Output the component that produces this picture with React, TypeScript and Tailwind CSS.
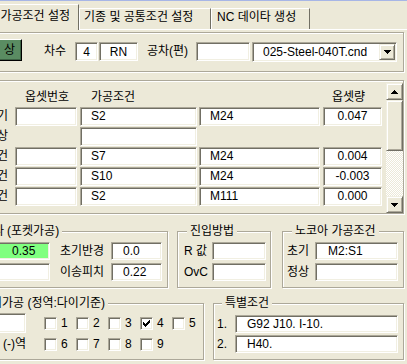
import React from "react";

const SUNKEN =
  "border border-t-[#aca899] border-l-[#aca899] border-r-white border-b-white shadow-[inset_1px_1px_0_#716f64,inset_-1px_-1px_0_#f1efe2]";
const RAISED =
  "border border-t-[#f1efe2] border-l-[#f1efe2] border-r-[#716f64] border-b-[#716f64] shadow-[inset_1px_1px_0_#ffffff,inset_-1px_-1px_0_#aca899]";
const ETCHED = "border border-[#aca899] shadow-[inset_1px_1px_0_#ffffff,1px_1px_0_#ffffff]";

type P = { className?: string; children?: React.ReactNode };

function Field({ className = "", children }: P) {
  return (
    <div className={`${SUNKEN} shrink-0 flex items-center whitespace-nowrap overflow-hidden ${className}`}>
      {children}
    </div>
  );
}

function Group({
  className = "",
  title,
  titleClass = "",
  children,
}: P & { title: React.ReactNode; titleClass?: string }) {
  return (
    <div className={`${ETCHED} shrink-0 flex flex-col ${className}`}>
      <div className={`-mt-[8px] h-[14px] w-fit bg-[#ece9d8] px-[3px] leading-[14px] whitespace-nowrap flex ${titleClass}`}>
        {title}
      </div>
      {children}
    </div>
  );
}

function UpArrow() {
  return (
    <svg width="7" height="4" viewBox="0 0 7 4" shapeRendering="crispEdges">
      <path d="M3 0h1v1h1v1h1v1h1v1H0V3h1V2h1V1h1z" fill="#000" />
    </svg>
  );
}

function DownArrow() {
  return (
    <svg width="7" height="4" viewBox="0 0 7 4" shapeRendering="crispEdges">
      <path d="M0 0h7v1h-1v1h-1v1h-1v1h-1V3H2V2H1V1H0z" fill="#000" />
    </svg>
  );
}

function Check({ n, on = false }: { n: string; on?: boolean }) {
  return (
    <div className="w-[32px] shrink-0 flex items-center">
      <div className={`${SUNKEN} w-[13px] h-[13px] bg-white shrink-0 flex items-center justify-center`}>
        {on ? (
          <svg width="7" height="7" viewBox="0 0 7 7" shapeRendering="crispEdges">
            <path
              d="M6 0h1v3H6v1H5v1H4v1H3v1H2V6H1V5H0V2h1v1h1v1h1V3h1V2h1V1h1z"
              fill="#000"
            />
          </svg>
        ) : null}
      </div>
      <span className="ml-[4px] leading-[14px]">{n}</span>
    </div>
  );
}

function Row({
  label,
  off = true,
  cond,
  m,
  val,
}: {
  label: string;
  off?: boolean;
  cond?: string;
  m?: string;
  val?: string;
}) {
  return (
    <div className="flex h-[19px] leading-[19px]">
      <div className="w-[44px] shrink-0 flex justify-end pr-[7px]">
        <span className="whitespace-nowrap shrink-0">{label}</span>
      </div>
      {off ? <Field className="w-[62px] bg-white" /> : <div className="w-[62px] shrink-0" />}
      <Field className="ml-[3px] w-[117px] bg-white pl-[10px]">{cond}</Field>
      {m !== undefined ? (
        <>
          <Field className="ml-[2px] w-[121px] bg-white pl-[10px]">{m}</Field>
          <Field className="ml-[3px] w-[59px] bg-white justify-center">{val}</Field>
        </>
      ) : null}
    </div>
  );
}

export default function App() {
  return (
    <div className="w-[407px] h-[364px] overflow-hidden bg-[#ece9d8] text-[12px] text-black font-[family-name:'Liberation_Sans','Noto_Sans_CJK_KR',sans-serif] flex flex-col select-none">
      <div className="h-px bg-[#a7b6e6] shrink-0" />

      {/* Tabs */}
      <div className="h-[29px] shrink-0 flex items-end">
        <div className="ml-[-21px] w-[100px] h-[26px] shrink-0 border-t border-l border-r border-t-white border-l-white border-r-[#716f64] flex justify-end pr-[8px] pt-[4px] leading-[14px] whitespace-nowrap">
          가공조건 설정
        </div>
        <div className="flex-1 h-full flex items-end border-b border-b-white">
          <div className="w-[132px] h-[21px] shrink-0 border-t border-l border-r border-t-white border-l-white border-r-[#716f64] pl-[4px] pt-[1px] leading-[14px] whitespace-nowrap">
            기종 및 공통조건 설정
          </div>
          <div className="w-[99px] h-[21px] shrink-0 border-t border-l border-r border-t-white border-l-white border-r-[#716f64] pl-[5px] pt-[1px] leading-[14px] whitespace-nowrap">
            NC 데이타 생성
          </div>
        </div>
      </div>

      {/* Top group */}
      <div className={`${ETCHED} mt-[2px] ml-[-30px] mr-[3px] h-[40px] shrink-0 pt-[6px] flex items-start`}>
        <div className="w-[51px] h-[22px] shrink-0 bg-[#5a8c62] border border-t-white border-l-white border-r-black border-b-black shadow-[inset_-1px_-1px_0_#3d6244] flex items-center justify-end pr-[6px] leading-[14px]">
          상
        </div>
        <div className="ml-[22px] w-[31px] mt-[3px] h-[19px] leading-[19px] shrink-0 whitespace-nowrap">차수</div>
        <Field className="mt-[3px] w-[23px] h-[19px] bg-white justify-center">4</Field>
        <Field className="ml-[1px] mt-[3px] w-[39px] h-[19px] bg-white justify-center">RN</Field>
        <div className="ml-[9px] w-[49px] mt-[3px] h-[19px] leading-[19px] shrink-0 whitespace-nowrap">공차(편)</div>
        <Field className="mt-[3px] w-[54px] h-[19px] bg-white" />
        <div className={`${SUNKEN} ml-[2px] mt-[3px] w-[145px] h-[20px] shrink-0 bg-white flex items-stretch p-[1px]`}>
          <div className="flex-1 flex items-center pl-[9px] whitespace-nowrap overflow-hidden">025-Steel-040T.cnd</div>
          <div className={`${RAISED} w-[16px] shrink-0 bg-[#ece9d8] flex items-center justify-center`}>
            <DownArrow />
          </div>
        </div>
      </div>

      {/* Table frame */}
      <div className={`${ETCHED} mt-[8px] ml-[-30px] mr-[3px] h-[134px] shrink-0 flex`}>
        <div className="flex-1 flex flex-col pt-[9px]">
          <div className="flex h-[14px] leading-[14px] whitespace-nowrap">
            <div className="w-[44px] shrink-0" />
            <div className="w-[62px] shrink-0 pl-[10px]">옵셋번호</div>
            <div className="ml-[3px] w-[117px] shrink-0 pl-[11px]">가공조건</div>
            <div className="ml-[2px] w-[121px] shrink-0" />
            <div className="ml-[3px] w-[59px] shrink-0 pl-[9px]">옵셋량</div>
          </div>
          <div className="mt-[3px] flex flex-col gap-[1px]">
            <Row label="초기" cond="S2" m="M24" val="0.047" />
            <Row label="정상" off={false} cond="" />
            <Row label="황삭조건" cond="S7" m="M24" val="0.004" />
            <Row label="중삭조건" cond="S10" m="M24" val="-0.003" />
            <Row label="정삭조건" cond="S2" m="M111" val="0.000" />
          </div>
        </div>
        <div className="w-[17px] mt-[2px] h-[130px] shrink-0 flex flex-col">
          <div className={`${RAISED} h-[17px] shrink-0 bg-[#ece9d8] flex items-center justify-center`}>
            <UpArrow />
          </div>
          <div className={`${RAISED} h-[51px] shrink-0 bg-[#ece9d8]`} />
          <div className="flex-1 bg-[image:repeating-conic-gradient(#ffffff_0_25%,#ece9d8_0_50%)] bg-[length:2px_2px]" />
          <div className={`${RAISED} h-[17px] shrink-0 bg-[#ece9d8] flex items-center justify-center`}>
            <DownArrow />
          </div>
        </div>
      </div>

      {/* Middle groups */}
      <div className="mt-[17px] h-[57px] shrink-0 flex ml-[-120px]">
        <Group
          className="w-[288px] h-full"
          titleClass="ml-[16px]"
          title={
            <>
              <span className="w-[104px] shrink-0 flex justify-end">헬리컬 파라메타</span>
              <span className="ml-[3px]">(포켓가공)</span>
            </>
          }
        >
          <div className="pt-[4px] flex flex-col gap-[3px]">
            <div className="flex h-[18px] leading-[18px]">
              <Field className="w-[169px] h-[18px] bg-[#80ff80] pl-[130px]">0.35</Field>
              <div className="ml-[10px] w-[51px] shrink-0 whitespace-nowrap">초기반경</div>
              <Field className="w-[51px] h-[18px] bg-white pl-[11px]">0.0</Field>
            </div>
            <div className="flex h-[18px] leading-[18px]">
              <Field className="w-[169px] h-[18px] bg-white" />
              <div className="ml-[10px] w-[51px] shrink-0 whitespace-nowrap">이송피치</div>
              <Field className="w-[51px] h-[18px] bg-white pl-[11px]">0.22</Field>
            </div>
          </div>
        </Group>
        <Group className="ml-[9px] w-[94px] h-full" title="진입방법" titleClass="ml-[9px]">
          <div className="pt-[4px] flex flex-col gap-[3px]">
            <div className="flex h-[18px] leading-[18px]">
              <div className="w-[34px] shrink-0 pl-[6px] whitespace-nowrap">R 값</div>
              <Field className="w-[54px] h-[18px] bg-white" />
            </div>
            <div className="flex h-[18px] leading-[18px]">
              <div className="w-[34px] shrink-0 pl-[6px] whitespace-nowrap">OvC</div>
              <Field className="w-[54px] h-[18px] bg-white" />
            </div>
          </div>
        </Group>
        <Group className="ml-[11px] w-[122px] h-full" title="노코아 가공조건" titleClass="ml-[9px]">
          <div className="pt-[4px] flex flex-col gap-[3px]">
            <div className="flex h-[18px] leading-[18px]">
              <div className="w-[32px] shrink-0 pl-[4px] whitespace-nowrap">초기</div>
              <Field className="w-[83px] h-[18px] bg-white pl-[12px]">M2:S1</Field>
            </div>
            <div className="flex h-[18px] leading-[18px]">
              <div className="w-[32px] shrink-0 pl-[4px] whitespace-nowrap">정상</div>
              <Field className="w-[83px] h-[18px] bg-white" />
            </div>
          </div>
        </Group>
      </div>

      {/* Bottom groups */}
      <div className="mt-[15px] h-[57px] shrink-0 flex ml-[-60px]">
        <Group
          className="w-[264px] h-full"
          titleClass="ml-[16px]"
          title={
            <>
              <span className="w-[42px] shrink-0 flex justify-end">다이</span>
              <span>가공 (정역:다이기준)</span>
            </>
          }
        >
          <div className="pt-[3px] flex flex-col gap-[1px]">
            <div className="flex h-[20px] items-center">
              <Field className="w-[85px] h-[20px] bg-white" />
              <div className="ml-[18px] flex">
                <Check n="1" />
                <Check n="2" />
                <Check n="3" />
                <Check n="4" on />
                <Check n="5" />
              </div>
            </div>
            <div className="flex h-[20px] items-center">
              <div className="w-[85px] shrink-0 flex justify-end leading-[20px] whitespace-nowrap">(-)역</div>
              <div className="ml-[18px] flex">
                <Check n="6" />
                <Check n="7" />
                <Check n="8" />
                <Check n="9" />
              </div>
            </div>
          </div>
        </Group>
        <Group className="ml-[9px] w-[191px] h-full" title="특별조건" titleClass="ml-[8px]">
          <div className="pt-[5px] flex flex-col gap-[2px]">
            <div className="flex h-[18px] leading-[18px]">
              <div className="w-[21px] shrink-0 pl-[3px]">1.</div>
              <Field className="w-[163px] h-[18px] bg-white pl-[11px]">G92 J10. I-10.</Field>
            </div>
            <div className="flex h-[18px] leading-[18px]">
              <div className="w-[21px] shrink-0 pl-[3px]">2.</div>
              <Field className="w-[163px] h-[18px] bg-white pl-[11px]">H40.</Field>
            </div>
          </div>
        </Group>
      </div>
    </div>
  );
}
